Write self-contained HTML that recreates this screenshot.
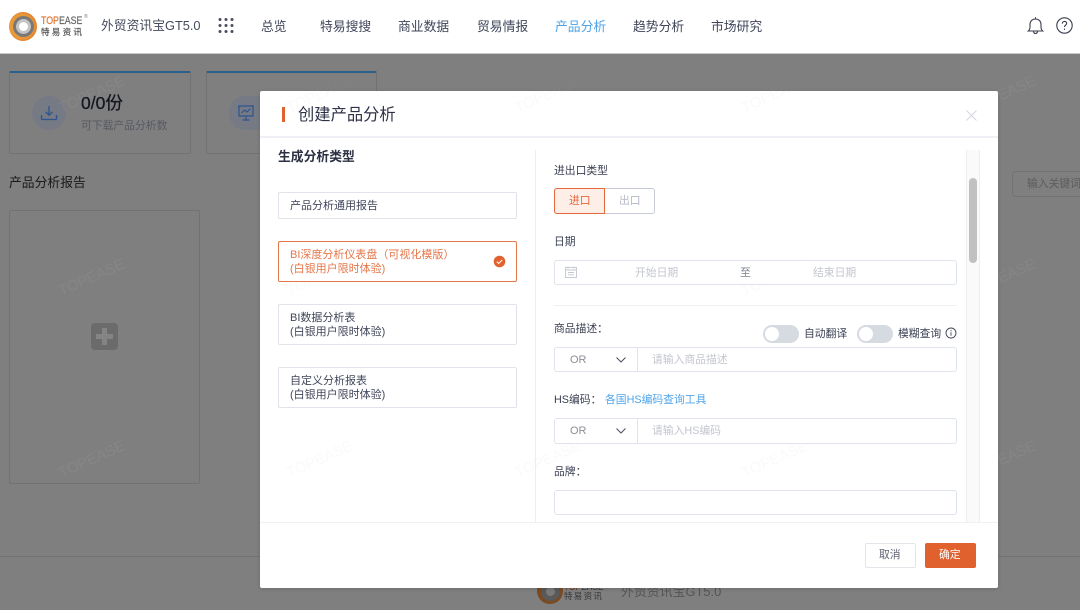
<!DOCTYPE html>
<html lang="zh">
<head>
<meta charset="utf-8">
<title>创建产品分析</title>
<style>
html,body{margin:0;padding:0}
body{width:1080px;height:610px;overflow:hidden;position:relative;background:#7f7f7f;font-family:"Liberation Sans","Noto Sans CJK SC",sans-serif;}
#w{position:absolute;left:0;top:0;width:1080px;height:610px;filter:blur(.35px)}
.a{position:absolute;box-sizing:border-box}
.t{position:absolute;white-space:nowrap;line-height:16px;height:16px;margin-top:1px}
.nav{font-size:12.8px;color:#3f4459;top:18px}
.wm{position:absolute;font-size:15px;line-height:18px;white-space:nowrap;transform:translate(-50%,-50%) rotate(-24deg)}
.wm.o{color:rgba(255,255,255,.055)}
.wm.i{color:rgba(170,175,190,.06)}
.item{position:absolute;left:278px;width:239px;border:1px solid #e0e3ea;border-radius:2px;background:#fff;box-sizing:border-box;font-size:11px;line-height:14px;color:#41465a;padding:6px 11px;white-space:nowrap}
.lab{font-size:10.8px;color:#3a3f52}
.inp{position:absolute;left:554px;width:403px;border:1px solid #dfe3ec;border-radius:3px;background:#fff;box-sizing:border-box}
.ph{font-size:10.8px;color:#c3c6ce}
.tog{position:absolute;width:36px;height:18px;border-radius:9px;background:#d6dae1;top:325px}
.tog i{position:absolute;left:2px;top:2px;width:14px;height:14px;border-radius:50%;background:#fff}
</style>
</head>
<body>
<div id="w">

<!-- Page under overlay -->
<div class="a" style="left:9px;top:71px;width:182px;height:83px;border:1px solid #727272;border-top:2px solid #2b5f8c;border-radius:2px"></div>
<div class="a" style="left:206px;top:71px;width:171px;height:83px;border:1px solid #727272;border-top:2px solid #2b5f8c;border-radius:2px"></div>
<div class="a" style="left:32px;top:96px;width:34px;height:34px;border-radius:50%;background:#767a84"></div>
<svg class="a" style="left:40px;top:104px" width="18" height="18" viewBox="0 0 18 18" fill="none" stroke="#2f5390" stroke-width="1.3"><path d="M9 2v9M5.500 7.800 9 11.200l3.500-3.400M1.500 11v3.500a1 1 0 0 0 1 1h13a1 1 0 0 0 1-1V11"/></svg>
<div class="a" style="left:229px;top:96px;width:31px;height:34px;border-radius:50% 0 0 50%;background:#767a84"></div>
<svg class="a" style="left:237px;top:104px" width="18" height="18" viewBox="0 0 18 18" fill="none" stroke="#2f5390" stroke-width="1.2"><path d="M1 2h16M2 2v10h14V2M4.500 9l3-3 2.500 2 3.500-3.500M9 12v4M5.500 16h7"/></svg>
<div class="t" style="left:81px;top:94px;font-size:17.500px;color:#12141f;-webkit-text-stroke:.25px #12141f">0/0份</div>
<div class="t" style="left:81px;top:117px;font-size:10.800px;color:#585a62">可下载产品分析数</div>
<div class="t" style="left:9px;top:174px;font-size:12.800px;color:#191919">产品分析报告</div>
<div class="a" style="left:9px;top:210px;width:191px;height:274px;border:1px solid #727272;border-radius:2px"></div>
<div class="a" style="left:91px;top:323px;width:27px;height:27px;border-radius:4px;background:#6b6b6b"></div>
<div class="a" style="left:96px;top:334px;width:17px;height:5px;background:#848484"></div>
<div class="a" style="left:102px;top:328px;width:5px;height:17px;background:#848484"></div>
<div class="a" style="left:1012px;top:171px;width:90px;height:26px;border:1px solid #737373;border-radius:3px"></div>
<div class="t" style="left:1027px;top:175px;font-size:10.800px;color:#5c5c5c">输入关键词</div>
<div class="a" style="left:0;top:556px;width:1080px;height:1px;background:#737373"></div>

<!-- footer logo -->
<div class="a" style="left:537px;top:578px;width:26px;height:26px;border-radius:50%;background:#7a4a22"></div>
<div class="a" style="left:541px;top:582px;width:19px;height:19px;border-radius:50%;background:#5a5a5a"></div>
<div class="a" style="left:546px;top:587px;width:9px;height:9px;border-radius:50%;background:#7a7a7a"></div>
<div class="t" style="left:564px;top:581px;margin:0;font-size:10.500px;color:#3a3a3a;transform:scaleX(.8);transform-origin:left;line-height:12px;height:12px"><span style="color:#6e3a1c">TOP</span>EASE</div>
<div class="t" style="left:564px;top:590px;margin:0;font-size:8.500px;color:#363636;letter-spacing:1.300px;line-height:12px;height:12px">特易资讯</div>
<div class="t" style="left:621px;top:583px;font-size:12.900px;color:#555">外贸资讯宝GT5.0</div>

<!-- Overlay watermarks -->
<div class="wm o" style="left:92px;top:95px">TOPEASE</div>
<div class="wm o" style="left:92px;top:278px">TOPEASE</div>
<div class="wm o" style="left:92px;top:460px">TOPEASE</div>
<div class="wm o" style="left:1003px;top:95px">TOPEASE</div>
<div class="wm o" style="left:1003px;top:278px">TOPEASE</div>
<div class="wm o" style="left:1003px;top:460px">TOPEASE</div>

<!-- Header -->
<div class="a" style="left:0;top:0;width:1080px;height:54px;background:#fff;border-bottom:1px solid #c9c9c9"></div>
<div class="a" style="left:9px;top:12px;width:28px;height:29px;border-radius:50%;background:radial-gradient(circle at 45% 50%,#e89a3a 0 55%,#e5782a 75%,#c9601f 100%)"></div>
<div class="a" style="left:13px;top:16px;width:21px;height:21px;border-radius:50%;background:#787878"></div>
<div class="a" style="left:16px;top:19px;width:15px;height:15px;border-radius:50%;background:#c4c4c4"></div>
<div class="a" style="left:19px;top:22px;width:9px;height:9px;border-radius:50%;background:#fff"></div>
<div class="t" style="left:41px;top:13px;margin:0;font-size:11px;color:#666;-webkit-text-stroke:.2px #666;transform:scaleX(.8);transform-origin:left"><span style="color:#e2722e;-webkit-text-stroke:.2px #e2722e">TOP</span>EASE</div>
<div class="t" style="left:84px;top:13px;margin:0;font-size:5px;color:#777;line-height:8px;height:8px">®</div>
<div class="t" style="left:41px;top:26px;margin:0;font-size:8.500px;color:#555;-webkit-text-stroke:.2px #555;letter-spacing:2.300px;line-height:12px;height:12px">特易资讯</div>
<div class="t" style="left:101px;top:17px;font-size:12.800px;color:#444a5c">外贸资讯宝GT5.0</div>
<svg class="a" style="left:218px;top:17px" width="16" height="17" viewBox="0 0 16 17" fill="#4a4d5e"><circle cx="2" cy="2.500" r="1.500"/><circle cx="8" cy="2.500" r="1.500"/><circle cx="14" cy="2.500" r="1.500"/><circle cx="2" cy="8.500" r="1.500"/><circle cx="8" cy="8.500" r="1.500"/><circle cx="14" cy="8.500" r="1.500"/><circle cx="2" cy="14.500" r="1.500"/><circle cx="8" cy="14.500" r="1.500"/><circle cx="14" cy="14.500" r="1.500"/></svg>
<div class="t nav" style="left:261px">总览</div>
<div class="t nav" style="left:320px">特易搜搜</div>
<div class="t nav" style="left:398px">商业数据</div>
<div class="t nav" style="left:477px">贸易情报</div>
<div class="t nav" style="left:555px;color:#4ba3ea">产品分析</div>
<div class="t nav" style="left:633px">趋势分析</div>
<div class="t nav" style="left:711px">市场研究</div>
<svg class="a" style="left:1027px;top:16px" width="17" height="19" viewBox="0 0 17 19" fill="none" stroke="#3a3e4e" stroke-width="1.100"><path d="M1.200 15h14.600c-1.300-1-1.800-2.300-1.800-4V8.500C14 5.300 11.800 3 8.500 3S3 5.300 3 8.500V11c0 1.700-.5 3-1.800 4zM8.500 3V1.200M6.500 15.500c.2 1.300 1 2 2 2s1.800-.7 2-2"/></svg>
<svg class="a" style="left:1056px;top:17px" width="17" height="17" viewBox="0 0 17 17" fill="none" stroke="#3a3e4e" stroke-width="1.100"><circle cx="8.500" cy="8.500" r="7.700"/><path d="M6.300 6.600c0-1.300 1-2.200 2.200-2.200s2.200.8 2.200 2c0 1.600-2.200 1.800-2.200 3.600"/><path d="M8.500 11.600v1.300"/></svg>

<!-- Modal -->
<div class="a" style="left:260px;top:91px;width:738px;height:497px;background:#fff;border-radius:2px;box-shadow:0 1px 4px rgba(0,0,0,.15)"></div>
<div class="wm i" style="left:320px;top:95px">TOPEASE</div>
<div class="wm i" style="left:548px;top:95px">TOPEASE</div>
<div class="wm i" style="left:775px;top:95px">TOPEASE</div>
<div class="wm i" style="left:320px;top:278px">TOPEASE</div>
<div class="wm i" style="left:775px;top:278px">TOPEASE</div>
<div class="wm i" style="left:320px;top:460px">TOPEASE</div>
<div class="wm i" style="left:548px;top:460px">TOPEASE</div>
<div class="wm i" style="left:775px;top:460px">TOPEASE</div>

<div class="a" style="left:282px;top:107px;width:3px;height:15px;background:#e2612c"></div>
<div class="t" style="left:298px;top:104px;font-size:16.300px;line-height:20px;height:20px;color:#2e3247">创建产品分析</div>
<svg class="a" style="left:966px;top:110px" width="11" height="11" viewBox="0 0 11 11" stroke="#d4d6db" stroke-width="1" fill="none"><path d="M.5.500l10 10M10.500.500l-10 10"/></svg>
<div class="a" style="left:260px;top:136px;width:738px;height:2px;background:#eef0f5"></div>

<!-- Left column -->
<div class="t" style="left:278px;top:148px;font-size:12.800px;font-weight:bold;color:#2b2f42">生成分析类型</div>
<div class="item" style="top:192px;height:27px">产品分析通用报告</div>
<div class="item" style="top:241px;height:41px;border-color:#e2774a;color:#e5764a">BI深度分析仪表盘（可视化模版）<br>(白银用户限时体验)</div>
<svg class="a" style="left:493px;top:255px" width="13" height="13" viewBox="0 0 13 13"><circle cx="6.500" cy="6.500" r="5.800" fill="#e0632f"/><path d="M3.800 6.600 5.700 8.400 9.200 5" fill="none" stroke="#fff" stroke-width="1"/></svg>
<div class="item" style="top:304px;height:41px">BI数据分析表<br>(白银用户限时体验)</div>
<div class="item" style="top:367px;height:41px">自定义分析报表<br>(白银用户限时体验)</div>
<div class="a" style="left:535px;top:150px;width:1px;height:372px;background:#eceef2"></div>

<!-- Right column -->
<div class="t lab" style="left:554px;top:162px">进出口类型</div>
<div class="a" style="left:554px;top:188px;width:101px;height:26px;border:1px solid #c5cad6;border-radius:3px;background:#fff"></div>
<div class="a" style="left:554px;top:188px;width:51px;height:26px;border:1px solid #e5683a;border-radius:3px 0 0 3px;background:#fdeee8"></div>
<div class="t" style="left:569px;top:192px;font-size:10.800px;color:#e5683a">进口</div>
<div class="t" style="left:619px;top:192px;font-size:10.800px;color:#b4b8c4">出口</div>

<div class="t lab" style="left:554px;top:233px">日期</div>
<div class="inp" style="top:260px;height:25px"></div>
<svg class="a" style="left:565px;top:266px" width="12" height="12" viewBox="0 0 12 12" fill="none" stroke="#c3c7d0" stroke-width=".9"><rect x=".5" y="1.500" width="11" height="10"/><path d="M.5 4h11M3 .5v2M9 .5v2M3 6.500h6M3 8.800h6"/></svg>
<div class="t ph" style="left:635px;top:264px">开始日期</div>
<div class="t" style="left:740px;top:264px;font-size:10.800px;color:#7b7f8c">至</div>
<div class="t ph" style="left:813px;top:264px">结束日期</div>
<div class="a" style="left:554px;top:305px;width:403px;height:1px;background:#eef0f4"></div>

<div class="t lab" style="left:554px;top:320px">商品描述：</div>
<div class="tog" style="left:763px"><i></i></div>
<div class="t lab" style="left:804px;top:325px">自动翻译</div>
<div class="tog" style="left:857px"><i></i></div>
<div class="t lab" style="left:898px;top:325px">模糊查询</div>
<svg class="a" style="left:945px;top:327px" width="12" height="12" viewBox="0 0 12 12" fill="none" stroke="#3f4354" stroke-width=".9"><circle cx="6" cy="6" r="5"/><path d="M6 5.200v3.500M6 3v1.200"/></svg>
<div class="inp" style="top:347px;height:25px"></div>
<div class="a" style="left:637px;top:347px;width:1px;height:25px;background:#dfe3ec"></div>
<div class="t" style="left:570px;top:351px;font-size:11px;color:#8b8e98">OR</div>
<svg class="a" style="left:615px;top:356px" width="12" height="8" viewBox="0 0 12 8" fill="none" stroke="#4a4e5e" stroke-width="1"><path d="M1.500 1.500 6 6l4.500-4.500"/></svg>
<div class="t ph" style="left:652px;top:351px">请输入商品描述</div>

<div class="t lab" style="left:554px;top:391px">HS编码：</div>
<div class="t" style="left:605px;top:391px;font-size:10.800px;color:#4fa4ea">各国HS编码查询工具</div>
<div class="inp" style="top:418px;height:26px"></div>
<div class="a" style="left:637px;top:418px;width:1px;height:26px;background:#dfe3ec"></div>
<div class="t" style="left:570px;top:422px;font-size:11px;color:#8b8e98">OR</div>
<svg class="a" style="left:615px;top:427px" width="12" height="8" viewBox="0 0 12 8" fill="none" stroke="#4a4e5e" stroke-width="1"><path d="M1.500 1.500 6 6l4.500-4.500"/></svg>
<div class="t ph" style="left:652px;top:422px">请输入HS编码</div>

<div class="t lab" style="left:554px;top:463px">品牌：</div>
<div class="inp" style="top:490px;height:25px"></div>

<!-- Scrollbar -->
<div class="a" style="left:966px;top:150px;width:14px;height:372px;background:#fafafa;border-left:1px solid #eceef1;border-right:1px solid #eceef1"></div>
<div class="a" style="left:969px;top:178px;width:8px;height:85px;border-radius:4px;background:#c1c1c1"></div>

<!-- Modal footer -->
<div class="a" style="left:260px;top:522px;width:738px;height:1px;background:#eff1f4"></div>
<div class="a" style="left:865px;top:543px;width:51px;height:25px;border:1px solid #e3e5ea;border-radius:2px;background:#fff"></div>
<div class="t" style="left:879px;top:546px;font-size:10.800px;color:#5f6372">取消</div>
<div class="a" style="left:925px;top:543px;width:51px;height:25px;border-radius:2px;background:#e0602e"></div>
<div class="t" style="left:939px;top:546px;font-size:10.800px;color:#fff">确定</div>

</div>
</body>
</html>
